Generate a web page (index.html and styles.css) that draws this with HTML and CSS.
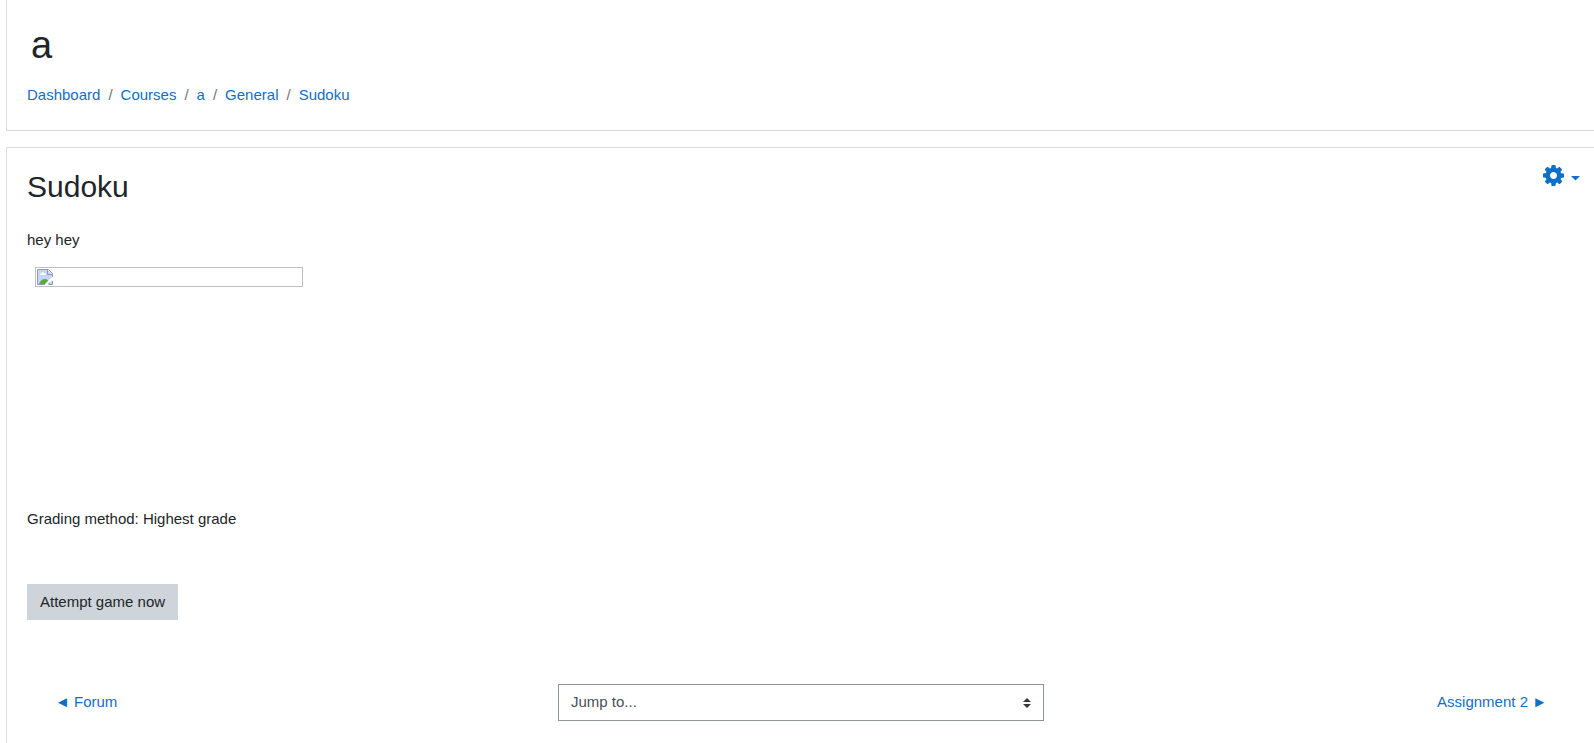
FILE: index.html
```html
<!DOCTYPE html>
<html lang="en">
<head>
<meta charset="utf-8">
<title>Sudoku</title>
<link rel="stylesheet" href="styles.css">
</head>
<body>
<div class="page">
  <header class="card page-header">
    <h1 class="course-title">a</h1>
    <nav aria-label="Breadcrumb">
      <ol class="breadcrumb">
        <li><a href="#">Dashboard</a></li>
        <li><a href="#">Courses</a></li>
        <li><a href="#">a</a></li>
        <li><a href="#">General</a></li>
        <li><a href="#">Sudoku</a></li>
      </ol>
    </nav>
  </header>
  <main class="card content">
    <div class="title-row">
      <h2 class="title">Sudoku</h2>
      <button class="settings" type="button" aria-label="Actions menu">
        <svg class="gear" viewBox="0 -128 1536 1536" aria-hidden="true"><path transform="matrix(1 0 0 -1 0 1280)" d="M1024 640q0 106 -75 181t-181 75t-181 -75t-75 -181t75 -181t181 -75t181 75t75 181zM1536 749v-222q0 -12 -8 -23t-20 -13l-185 -28q-19 -54 -39 -91q35 -50 107 -138q10 -12 10 -25t-9 -23q-27 -37 -99 -108t-94 -71q-12 0 -26 9l-138 108q-44 -23 -91 -38q-16 -136 -29 -186q-7 -28 -36 -28h-222q-14 0 -24.5 8.5t-11.5 21.5l-28 184q-49 16 -90 37l-141 -107q-10 -9 -25 -9q-14 0 -25 11q-126 114 -165 168q-7 10 -7 23q0 12 8 23q15 21 51 66.5t54 70.5q-27 50 -41 99l-183 27q-13 2 -21 12.5t-8 23.5v222q0 12 8 23t19 13l186 28q14 46 39 92q-40 57 -107 138q-10 12 -10 24q0 10 9 23q26 36 98.5 107.5t94.5 71.5q13 0 26 -10l138 -107q44 23 91 38q16 136 29 186q7 28 36 28h222q14 0 24.5 -8.5t11.5 -21.5l28 -184q49 -16 90 -37l142 107q9 9 24 9q13 0 25 -10q129 -119 165 -170q7 -8 7 -22q0 -12 -8 -23q-15 -21 -51 -66.5t-54 -70.5q26 -50 41 -98l183 -28q13 -2 21 -12.5t8 -23.5z"/></svg>
        <svg class="caret" viewBox="0 0 9 5" aria-hidden="true"><path d="M0 0h9L4.5 4.5z"/></svg>
      </button>
    </div>
    <p class="intro">hey hey</p>
    <div class="media">
      <div class="missing-image" role="img" aria-label="Missing image">
        <svg class="missing-icon" viewBox="0 0 16 16" aria-hidden="true">
          <path fill="#c3d6f7" d="M1 1h10l4 4v10H1z"/>
          <path fill="#fff" d="M3 6q0-2 2-2q1-2 2 0q2 0 2 2z"/>
          <path fill="#58ad36" d="M2 15q2-5 6-5q3 0 5 5z"/>
          <path fill="#fff" d="M16 7v3l-6 6H7z"/>
          <path fill="#fff" d="M11 0h5v5z"/>
          <path fill="none" stroke="#9a9a9a" d="M15.500 8V4.500L11.500.5H.5v15H8M11.500 15.500h4V12M10.500 1v4.500H15"/>
        </svg>
      </div>
    </div>
    <p class="grading">Grading method: Highest grade</p>
    <button class="attempt" type="button">Attempt game now</button>
    <nav class="activity-nav" aria-label="Activities">
      <a class="previous" href="#">◄ Forum</a>
      <select class="jump" aria-label="Jump to...">
        <option>Jump to...</option>
      </select>
      <a class="next" href="#">Assignment 2 ►</a>
    </nav>
  </main>
</div>
</body>
</html>
```
FILE: styles.css
```css
* {
  box-sizing: border-box;
}

body {
  margin: 0;
  background: #fff;
  color: #212529;
  font: 15px/22px "Liberation Sans", Arial, sans-serif;
}

h1, h2, p, ol {
  margin: 0;
  padding: 0;
  font-weight: 400;
}

a {
  color: #0f6fc5;
  text-decoration: none;
}

button, select {
  font: inherit;
}

.page {
  display: flex;
  flex-direction: column;
  gap: 16px;
  min-height: 100vh;
  padding-left: 6px;
}

.card {
  border-left: 1px solid #dbdcdd;
}

.page-header {
  padding: 23px 20px 24px;
  border-bottom: 1px solid #dbdcdd;
}

.course-title {
  margin-bottom: 16px;
  padding-left: 4px;
  font-size: 38px;
  line-height: 45px;
}

.breadcrumb {
  display: flex;
  flex-wrap: wrap;
  list-style: none;
}

.breadcrumb li + li::before {
  content: "/";
  padding: 0 8px;
  color: #6c757d;
}

.content {
  flex: 1;
  padding: 17px 20px 20px;
  border-top: 1px solid #dbdcdd;
}

.title-row {
  display: flex;
  justify-content: space-between;
  align-items: flex-start;
  margin: 0 -6px 24px 0;
}

.title {
  padding-top: 4px;
  font-size: 30px;
  line-height: 36px;
}

.settings {
  display: flex;
  align-items: center;
  gap: 7px;
  padding: 0;
  border: 0;
  background: none;
  fill: #0f6fc5;
}

.gear {
  width: 21px;
  height: 21px;
}

.caret {
  width: 9px;
  height: 5px;
  margin-top: 6px;
}

.intro {
  margin-bottom: 16px;
}

.media {
  height: 241px;
  padding-left: 8px;
}

.missing-image {
  display: flex;
  width: 268px;
  height: 20px;
  padding: 1px;
  border: 1px solid #c0c0c0;
}

.missing-icon {
  width: 16px;
  height: 16px;
}

.grading {
  margin-bottom: 54px;
}

.attempt {
  display: block;
  padding: 7px 13px;
  border: 0;
  background: #ced4da;
  color: #212529;
}

.activity-nav {
  display: grid;
  grid-template-columns: repeat(3, 1fr);
  gap: 30px;
  align-items: center;
  margin-top: 64px;
  padding: 0 14px 0 15px;
}

.previous {
  padding: 0 0 2px 13px;
}

.next {
  padding: 0 13px 2px 0;
  text-align: right;
}

.jump {
  width: 100%;
  height: 37px;
  padding: 0 12px 2px;
  border: 1px solid #8f959e;
  border-radius: 0;
  appearance: none;
  color: #495057;
  background: #fff url("data:image/svg+xml,%3Csvg xmlns='http://www.w3.org/2000/svg' viewBox='0 0 4 5'%3E%3Cpath fill='%23343a40' d='M2 0L0 2h4zm0 5L0 3h4z'/%3E%3C/svg%3E") no-repeat right 12px center / 8px 10px;
}
```
